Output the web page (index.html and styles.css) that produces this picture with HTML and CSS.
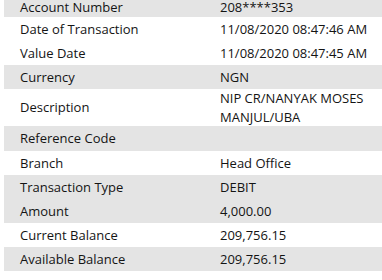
FILE: index.html
```html
<!DOCTYPE html>
<html>
<head>
<meta charset="utf-8">
<link rel="stylesheet" href="styles.css">
</head>
<body>
<div class="details">
  <div class="row shade first"><div class="label">Account Number</div><div class="value">208****353</div></div>
  <div class="row"><div class="label">Date of Transaction</div><div class="value">11/08/2020 08:47:46 AM</div></div>
  <div class="row"><div class="label">Value Date</div><div class="value">11/08/2020 08:47:45 AM</div></div>
  <div class="row shade"><div class="label">Currency</div><div class="value">NGN</div></div>
  <div class="row tall"><div class="label">Description</div><div class="value">NIP CR/NANYAK MOSES<br>MANJUL/UBA</div></div>
  <div class="row shade ref"><div class="label">Reference Code</div><div class="value"></div></div>
  <div class="row"><div class="label">Branch</div><div class="value">Head Office</div></div>
  <div class="row shade"><div class="label">Transaction Type</div><div class="value">DEBIT</div></div>
  <div class="row shade"><div class="label">Amount</div><div class="value">4,000.00</div></div>
  <div class="row"><div class="label">Current Balance</div><div class="value">209,756.15</div></div>
  <div class="row shade"><div class="label">Available Balance</div><div class="value">209,756.15</div></div>
</div>
</body>
</html>
```
FILE: styles.css
```css
html, body {
  margin: 0;
  padding: 0;
  background: #ffffff;
  overflow: hidden;
}
body {
  font-family: "Open Sans", "Noto Sans", sans-serif;
  font-size: 13px;
  color: #141414;
}
.details {
  margin: 0 0 0 4px;
  display: flex;
  flex-direction: column;
}
.row {
  display: grid;
  grid-template-columns: 200px 1fr;
  align-items: center;
  height: 24px;
}
.row.first {
  height: 17px;
  padding-bottom: 2px;
  box-sizing: border-box;
}
.row.tall {
  height: 37px;
}
.row.ref {
  height: 25px;
}
.row.shade {
  background: #e4e4e4;
}
.label, .value {
  padding-left: 16px;
  line-height: 18.5px;
  white-space: nowrap;
}
.first .label, .first .value {
  line-height: 15px;
}
```
